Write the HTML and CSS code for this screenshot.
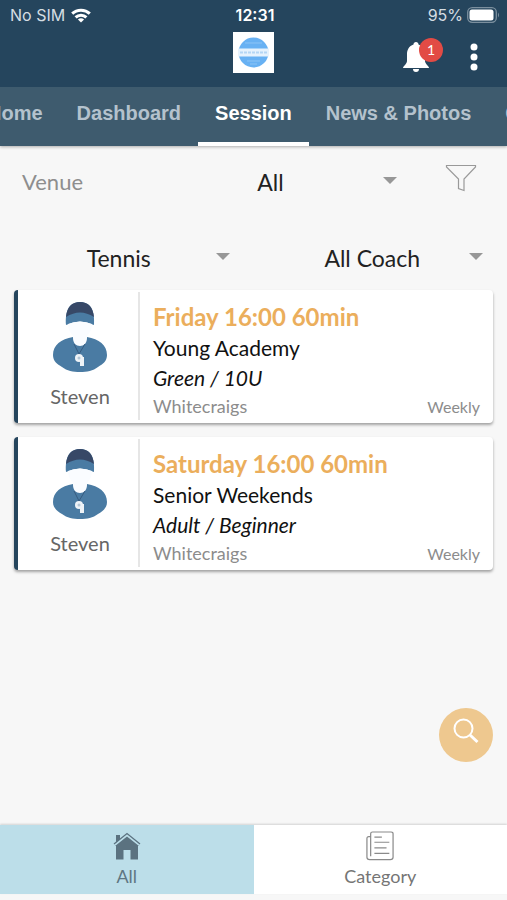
FILE: index.html
```html
<!DOCTYPE html>
<html lang="en">
<head>
<meta charset="utf-8">
<meta name="viewport" content="width=device-width, initial-scale=1">
<title>Session</title>
<link rel="stylesheet" href="styles.css">
</head>
<body>
<svg width="0" height="0" class="defs" aria-hidden="true">
  <symbol id="coach" viewBox="0 0 54 70">
    <path d="M0 53C0 43 8 37 20 35H34C46 37 54 43 54 53C54 59 50 62 45 65C40 69 34 70 27 70S14 69 9 65C4 62 0 59 0 53Z" fill="#4a7ba3"/>
    <path d="M13 23C12 9 16 0 27 0S42 9 41 23Q27 16 13 23Z" fill="#4a7ba3"/>
    <path d="M13 15C14 5 19 0 27 0S40 5 41 15Q27 6 13 15Z" fill="#374867"/>
    <path d="M15 22Q27 17 39 22C39 27 37 31 34 34V36C34 41 31 44 27 44S20 41 20 36V34C17 31 15 27 15 22Z" fill="#fafcff"/>
    <path d="M21 42L26 52L32 42" fill="none" stroke="#365b80" stroke-width="1"/>
    <circle cx="26" cy="56" r="4" fill="#eef3f7"/>
    <path d="M26 55H31V64H27V59Z" fill="#eef3f7"/>
    <circle cx="26" cy="56" r="1.500" fill="#b5c7d6"/>
  </symbol>
</svg>

<header class="top">
  <div class="status">
    <div class="status-left">
      <span>No SIM</span>
      <svg width="20" height="15" viewBox="0 0 20 15" aria-hidden="true"><g fill="none" stroke="#fff" stroke-width="3"><path d="M1.2 5.6C6 1 14 1 18.8 5.6"/><path d="M4.6 9.3C7.6 6.4 12.4 6.4 15.4 9.3"/></g><path d="M10 14.6L6.9 11.5Q10 9 13.1 11.5Z" fill="#fff"/></svg>
    </div>
    <strong class="clock">12:31</strong>
    <div class="status-right">
      <span>95%</span>
      <svg width="33" height="16" viewBox="0 0 33 16" aria-hidden="true"><rect x=".7" y=".7" width="28.6" height="14.6" rx="4.5" fill="none" stroke="#7b8f9e" stroke-width="1.3"/><rect x="2.5" y="2.5" width="24" height="11" rx="2.5" fill="#fff"/><path d="M31 5.5Q33 8 31 10.5Z" fill="#7b8f9e"/></svg>
    </div>
  </div>
  <div class="bar">
    <svg class="logo" width="41" height="41" viewBox="0 0 41 41" role="img" aria-label="Club logo"><rect width="41" height="41" fill="#fff"/><circle cx="20.500" cy="20.500" r="15" fill="#68b1f3"/><path d="M12 11H29M14 29H27M17 32H24" stroke="#8cc4f6" stroke-width="1"/><path d="M5 16.500H36V24.500H5Z" fill="#e6f2fd"/><path d="M7 20.500H34" stroke="#b4d6f5" stroke-width="2" stroke-dasharray="3 1"/></svg>
    <div class="actions">
      <button class="icon-btn bell" aria-label="Notifications">
        <svg width="28" height="32" viewBox="0 0 28 32" aria-hidden="true"><path d="M14 1C15.500 1 16.500 2 16.500 3.500C21 5 23 9 23 13V20C23 23 27 25 27 27H1C1 25 5 23 5 20V13C5 9 7 5 11.500 3.500C11.500 2 12.500 1 14 1ZM11 28H17Q17 31 14 31T11 28Z" fill="#fff"/></svg>
        <span class="badge">1</span>
      </button>
      <button class="icon-btn" aria-label="More">
        <svg width="8" height="28" viewBox="0 0 8 28" aria-hidden="true"><g fill="#fff"><circle cx="4" cy="4" r="3.500"/><circle cx="4" cy="14" r="3.500"/><circle cx="4" cy="24" r="3.500"/></g></svg>
      </button>
    </div>
  </div>
  <nav class="tabs" aria-label="Sections">
    <a href="#">Home</a>
    <a href="#">Dashboard</a>
    <a href="#" class="active" aria-current="page">Session</a>
    <a href="#">News &amp; Photos</a>
    <a href="#">C</a>
  </nav>
</header>

<main>
  <form class="filters">
    <div class="filter-row venue-row">
      <label for="venue">Venue</label>
      <div class="pick"><select id="venue"><option>All</option></select></div>
      <button type="button" class="icon-btn" aria-label="Filter">
        <svg width="32" height="28" viewBox="0 0 32 28" aria-hidden="true"><path d="M1.500 1.500H30.500V3L19 15V26.500L13.500 24.500V15L1.500 3Z" fill="none" stroke="#999" stroke-width="1.200"/></svg>
      </button>
    </div>
    <div class="filter-row pair-row">
      <div class="pick"><select aria-label="Sport"><option>Tennis</option></select></div>
      <div class="pick"><select aria-label="Coach"><option>All Coach</option></select></div>
    </div>
  </form>

  <div class="cards">
    <article class="card">
      <div class="coach">
        <svg width="54" height="70" aria-hidden="true"><use href="#coach"/></svg>
        <span>Steven</span>
      </div>
      <div class="info">
        <h2>Friday 16:00 60min</h2>
        <p>Young Academy</p>
        <p class="level">Green / 10U</p>
        <div class="meta"><span>Whitecraigs</span><span class="freq">Weekly</span></div>
      </div>
    </article>
    <article class="card">
      <div class="coach">
        <svg width="54" height="70" aria-hidden="true"><use href="#coach"/></svg>
        <span>Steven</span>
      </div>
      <div class="info">
        <h2>Saturday 16:00 60min</h2>
        <p>Senior Weekends</p>
        <p class="level">Adult / Beginner</p>
        <div class="meta"><span>Whitecraigs</span><span class="freq">Weekly</span></div>
      </div>
    </article>
  </div>
</main>

<button class="search" aria-label="Search">
  <svg width="26" height="26" viewBox="0 0 26 26" aria-hidden="true"><g fill="none" stroke="#fff" stroke-width="2"><circle cx="10.500" cy="10.500" r="9"/><path d="M17 17L24.500 24" stroke-width="3"/></g></svg>
</button>

<nav class="bottom" aria-label="Views">
  <a href="#" class="active" aria-current="page">
    <svg width="28" height="30" viewBox="0 0 28 30" aria-hidden="true"><path d="M3 4H7V8L3 11.500ZM14 5.500L26 15H25V28.500H17.500V19H10.500V28.500H3V15H2Z" fill="#5b7280"/><path d="M1 13L14 2.500L27 13" fill="none" stroke="#5b7280" stroke-width="1.300"/></svg>
    <span>All</span>
  </a>
  <a href="#">
    <svg width="28" height="30" viewBox="0 0 30 32" aria-hidden="true"><g fill="none" stroke="#8a8a8a" stroke-width="1.300"><path d="M5 6H3Q1 6 1 8V28Q1 30.500 4 30.500H26Q29 30.500 29 28V3Q29 1 27 1H7Q5 1 5 3V27"/><path d="M9 6.500H17M9 12H25M9 18H22M9 24H25"/></g></svg>
    <span>Category</span>
  </a>
</nav>
</body>
</html>
```
FILE: styles.css
```css
* { box-sizing: border-box; }

body {
  margin: 0;
  min-height: 100vh;
  display: flex;
  flex-direction: column;
  overflow-x: hidden;
  background: #f7f7f7;
  color: #111;
  font-family: Lato, "Open Sans", sans-serif;
}

a { color: inherit; text-decoration: none; }
.defs { position: absolute; }

.top {
  background: #25455d;
  color: #fff;
  box-shadow: 0 1px 3px rgba(0, 0, 0, 0.3);
}

.status {
  display: grid;
  grid-template-columns: 1fr auto 1fr;
  align-items: center;
  height: 30px;
  padding: 0 7px 0 10px;
  font: 16px/20px Inter, sans-serif;
}
.status span { color: #d5dde3; }
.status-left, .status-right { display: flex; align-items: center; gap: 6px; }
.status-right { justify-content: flex-end; gap: 4px; }
.clock { font-weight: 600; }

.bar {
  display: grid;
  grid-template-columns: 1fr auto 1fr;
  height: 57px;
  padding: 2px 29px 0;
}
.logo { grid-column: 2; }
.actions {
  display: flex;
  justify-content: flex-end;
  align-items: center;
  gap: 40px;
  height: 50px;
}

.icon-btn {
  display: flex;
  padding: 0;
  border: 0;
  background: none;
}
.bell { position: relative; }
.badge {
  position: absolute;
  top: -3px;
  left: 17px;
  width: 24px;
  height: 24px;
  border-radius: 50%;
  background: #e24b45;
  color: #fff;
  font: 14px/24px Lato, sans-serif;
  text-align: center;
}

.tabs {
  display: flex;
  overflow: hidden;
  height: 59px;
  background: #3e5b6e;
  color: #b4c2cd;
  font: bold 20px/24px "Liberation Sans", sans-serif;
  white-space: nowrap;
}
.tabs a {
  flex: none;
  padding: 14px 17px 17px;
  border-bottom: 4px solid transparent;
}
.tabs a:first-child { margin-left: -30px; }
.tabs .active { color: #fff; border-color: #fff; }

main { flex: 1; }

.filter-row { display: grid; align-items: start; }
.venue-row {
  grid-template-columns: 114px 1fr 32px;
  padding: 14px 30px 0 22px;
  height: 74px;
}
.venue-row label { color: #8e8e8e; font-size: 22px; line-height: 44px; }
.venue-row .icon-btn { margin-top: 4px; }
.venue-row .pick { margin-right: 24px; }
.pair-row { grid-template-columns: 1fr 1fr; height: 70px; padding-top: 16px; }

.pick { position: relative; }
.pick::after {
  content: "";
  position: absolute;
  top: 17px;
  right: 24px;
  border: 7px solid transparent;
  border-top-color: #979797;
  border-bottom: 0;
  pointer-events: none;
}
.pick select {
  display: block;
  width: 100%;
  height: 44px;
  padding: 0 16px 0 0;
  border: 0;
  background: none;
  color: #222;
  appearance: none;
  font: 23px/28px Lato, sans-serif;
  text-align: center;
  text-align-last: center;
}

.cards {
  display: flex;
  flex-direction: column;
  gap: 14px;
  padding: 0 14px;
}
.card {
  display: flex;
  height: 133px;
  padding: 2px 0 3px;
  border-left: 4px solid #25455d;
  border-radius: 4px;
  background: #fff;
  box-shadow: 0 2px 3px rgba(0, 0, 0, 0.35);
}
.coach {
  display: flex;
  flex-direction: column;
  align-items: center;
  gap: 12px;
  flex: none;
  width: 122px;
  padding: 10px 0 0 4px;
  border-right: 2px solid #e6e6e6;
  color: #666;
  font-size: 20px;
  line-height: 24px;
}
.info { flex: 1; padding: 9px 13px 0; }
.info h2, .info p { margin: 0; }
.info h2 { color: #ebae5c; font-size: 24px; line-height: 32px; }
.info p { font-size: 21px; line-height: 30px; }
.level { font-style: italic; }
.meta {
  display: flex;
  justify-content: space-between;
  align-items: baseline;
  color: #8c8c8c;
  font-size: 18px;
  line-height: 26px;
}
.meta .freq { font-size: 16px; }

.search {
  position: fixed;
  right: 14px;
  bottom: 138px;
  display: flex;
  justify-content: center;
  width: 54px;
  height: 54px;
  padding: 10px 0;
  border: 0;
  border-radius: 50%;
  background: #eec88f;
}

.bottom {
  display: grid;
  grid-template-columns: 1fr 1fr;
  height: 69px;
  margin-bottom: 6px;
  background: #fff;
  box-shadow: 0 -1px 2px rgba(0, 0, 0, 0.15);
}
.bottom a {
  display: flex;
  flex-direction: column;
  align-items: center;
  justify-content: space-between;
  padding: 6px 0;
  color: #757575;
  font-size: 18px;
  line-height: 24px;
}
.bottom .active { background: #bcdee9; color: #5f7682; }
```
